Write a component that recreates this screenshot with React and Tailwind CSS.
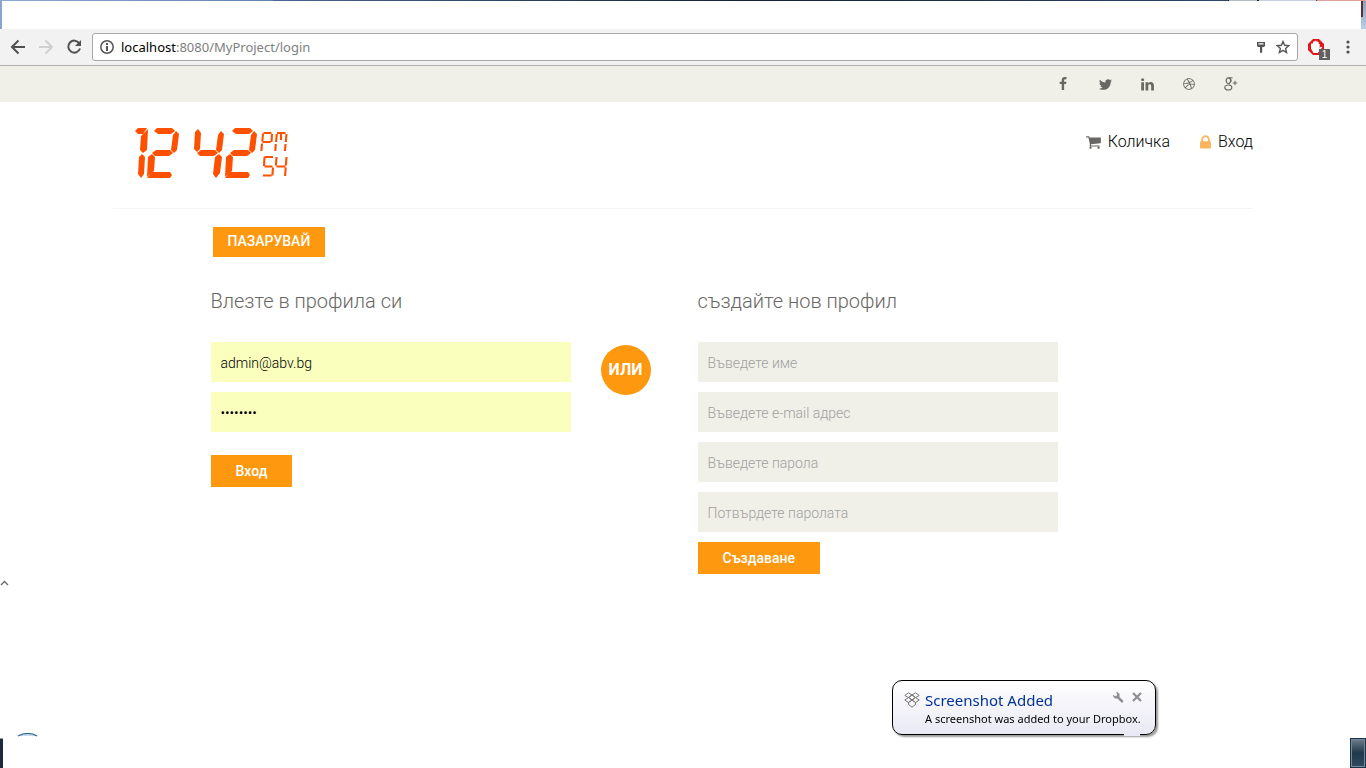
import React from "react";
import { FaDribbble } from "react-icons/fa";

const CLOCK = "#ff5000";

const DIGITS = { 1: "bc", 2: "abged", 4: "fgbc", 5: "afgcd" };

/* Slanted seven-segment shapes on a 32 x 50 grid */
const SEGMENTS = {
  a: "11,0 26,0 29,3 25,6 12,6 8,3",
  b: "30,3 33,6 31,22 28,25 25,22 27,7",
  c: "28,26 31,29 29,45 25,50 22,46 24,29",
  d: "6,44 24,44 26,47 24,50 1,50",
  e: "6,26 9,29 8,43 1,49 2,29",
  f: "7,1 10,5 9,21 6,24 3,21 4,4",
  g: "10,22 24,22 27,25 23,28 9,28 6,25",
};

function Digit({ value, x }) {
  return (
    <g transform={`translate(${x} 0)`}>
      {DIGITS[value].split("").map((s) => (
        <polygon key={s} points={SEGMENTS[s]} />
      ))}
    </g>
  );
}

function Clock() {
  return (
    <svg role="img" aria-label="12:42:54 PM" width="154" height="52" viewBox="0 0 154 52" fill={CLOCK}>
      <polygon points="0,3 3,0 12,0 8,6 3,6" />
      <polygon points="13,1 12,22 8,25 5,22 6,8" />
      <polygon points="7,26 10,29 9,46 6,50 3,46 4,29" />
      <Digit value="2" x="11" />
      <Digit value="4" x="56" />
      <Digit value="2" x="89" />
      <g fill="none" stroke={CLOCK} strokeWidth="2.1">
        <path d="M128.500 5h8M137 6l-.5 8M127.500 14h8M128 5.500l-.7 8M127 15.500l-.6 7.500M142 5h8.500M141.800 6l-.7 8M140.800 16l-.5 7M146 5v7M151.500 6l-.7 8M150.500 16l-.5 7" />
        <path d="M129.500 29h8.500M129.500 29l-.5 9M129.500 38.500h8M138 39.500l-.6 8M128 47.500h8.500M141.500 29l-.6 8.500M141.500 38.500h9M151.500 29l-.6 8.500M150.700 39.500l-.6 8.500" />
      </g>
    </svg>
  );
}

function Glyph({ d, size = "size-[14px]" }) {
  return (
    <svg viewBox="0 0 1792 1792" fill="currentColor" className={size} aria-hidden="true">
      <path d={d} />
    </svg>
  );
}

const FACEBOOK = "M1343 12v264h-157q-86 0-116 36t-30 108v189h293l-39 296h-254v759h-306v-759h-255v-296h255v-218q0-186 104-288.5t277-102.5q147 0 228 12z";
const TWITTER = "M1684 408q-67 98-162 167 1 14 1 42 0 130-38 259.5t-115.5 248.5-184.5 210.5-258 146-323 54.5q-271 0-496-145 35 4 78 4 225 0 401-138-105-2-188-64.5t-114-159.5q33 5 61 5 43 0 85-11-112-23-185.5-111.5t-73.5-205.5v-4q68 38 146 41-66-44-105-115t-39-154q0-88 44-163 121 149 294.5 238.5t371.5 99.5q-8-38-8-74 0-134 94.5-228.5t228.5-94.5q140 0 236 102 109-21 205-78-37 115-142 178 93-10 186-50z";
const LINKEDIN = "M477 625v991h-330v-991h330zm21-306q1 73-50.5 122t-135.5 49h-2q-82 0-132-49t-50-122q0-74 51.5-122.5t134.5-48.5 133 48.5 51 122.5zm1166 729v568h-329v-530q0-105-40.5-164.5t-126.5-59.5q-63 0-105.5 34.5t-63.5 85.5q-11 30-11 81v553h-329q2-399 2-647t-1-296l-1-48h329v144h-2q20-32 41-56t56.5-52 87-43.5 114.5-15.5q171 0 275 113.5t104 332.5z";
const CART = "M640 1536q0 52-38 90t-90 38-90-38-38-90 38-90 90-38 90 38 38 90zm896 0q0 52-38 90t-90 38-90-38-38-90 38-90 90-38 90 38 38 90zm128-1088v512q0 24-16.5 42.5t-40.5 21.5l-1044 122q13 60 13 70 0 16-24 64h920q26 0 45 19t19 45-19 45-45 19h-1024q-26 0-45-19t-19-45q0-11 8-31.5t16-36 21.5-40 15.5-29.5l-177-823h-204q-26 0-45-19t-19-45 19-45 45-19h256q16 0 28.5 6.5t19.5 15.5 13 24.5 8 26 5.5 29.5 4.5 26h1201q26 0 45 19t19 45z";
const LOCK = "M640 768h512v-192q0-106-75-181t-181-75-181 75-75 181v192zm832 96v576q0 40-28 68t-68 28h-960q-40 0-68-28t-28-68v-576q0-40 28-68t68-28h32v-192q0-184 132-316t316-132 316 132 132 316v192h32q40 0 68 28t28 68z";

function GooglePlus() {
  return (
    <svg viewBox="0 0 14 14" className="size-[14px]" fill="none" stroke="currentColor" aria-hidden="true">
      <ellipse cx="4.4" cy="3.7" rx="2.2" ry="2.8" strokeWidth="1.2" />
      <path d="M4.600 .8h4M6.200 1.200c1.400 1.600 1.100 3.600 0 4.400s-1.200 1.300 0 2.100" strokeWidth="1" />
      <ellipse cx="4.300" cy="10.500" rx="3.500" ry="2.500" strokeWidth="1.200" />
      <path d="M11 3.800v4.400M8.800 6h4.400" strokeWidth="1" />
    </svg>
  );
}

function BrowserBar() {
  return (
    <div className="flex h-9 items-center border-b border-[#b0b0b0] bg-[#f2f2f2] pr-[10px] pb-px">
      <button aria-label="Back" className="flex w-9 justify-center text-[#505050]">
        <svg width="16" height="16" viewBox="0 0 16 16" fill="none" stroke="currentColor" strokeWidth="2">
          <path d="M15 8H2.500M8.500 1.500 2 8l6.500 6.500" />
        </svg>
      </button>
      <button aria-label="Forward" className="flex w-5 justify-center text-[#d0d0d0]">
        <svg width="16" height="16" viewBox="0 0 16 16" fill="none" stroke="currentColor" strokeWidth="2">
          <path d="M1 8h12.500M7.500 1.500 14 8l-6.500 6.500" />
        </svg>
      </button>
      <button aria-label="Reload" className="flex w-9 justify-center text-[#505050]">
        <svg width="16" height="16" viewBox="0 0 16 16" fill="none" stroke="currentColor" strokeWidth="2">
          <path d="M13.300 4.300A6 6 0 1 0 14 9.500" />
          <path d="M15 1v6H9z" fill="currentColor" stroke="none" />
        </svg>
      </button>
      <div className="flex h-7 grow items-center rounded-[3px] border border-[#a8a8a8] bg-white px-[7px]">
        <svg width="14" height="14" viewBox="0 0 14 14" fill="none" stroke="#555" strokeWidth="1.500" aria-hidden="true">
          <circle cx="7" cy="7" r="6.200" />
          <path d="M7 3v2M7 6v5" strokeWidth="2" />
        </svg>
        <div className="ml-[7px] grow font-['Noto_Sans',sans-serif] text-[13px] leading-5 text-[#808080]">
          <span className="text-black">localhost</span>:8080/MyProject/login
        </div>
        <button aria-label="Saved passwords" className="mr-[10px]">
          <svg width="10" height="13" viewBox="0 0 10 13" fill="#555">
            <path fillRule="evenodd" d="M1 1h8v4L8 6H6.200v5L5 12.300 4 11.500V6H2L1 5zM2.500 2.300v1.200h5V2.300z" />
          </svg>
        </button>
        <button aria-label="Bookmark this page">
          <svg width="14" height="14" viewBox="0 0 14 14" fill="none" stroke="#555" strokeWidth="1.400">
            <path d="M7 1.500l1.600 3.800 4.200.4-3.200 2.700 1 4.100L7 10.300l-3.600 2.200 1-4.100L1.200 5.700l4.200-.4z" />
          </svg>
        </button>
      </div>
      <button aria-label="Content blocker" className="relative mr-4 ml-[10px]">
        <svg width="16" height="16" viewBox="0 0 16 16">
          <path d="M5 0h6l5 5v6l-5 5H5l-5-5V5z" fill="#e3151a" />
          <path d="M5.500 14 3 9.500V5l1.200-1 .8 1V3l1.200-1 .8 1V1.800h1.500V3l1-.8 1.200 1v1.500l1 .3V9l1.500-1.500 1 1L11 12.500 9.500 14z" fill="#fff" />
        </svg>
        <span className="absolute top-[10px] left-[11px] h-[11px] w-[11px] bg-[#606060] text-center font-['Liberation_Sans',sans-serif] text-[10px] leading-[11px] text-white">1</span>
      </button>
      <button aria-label="Menu" className="flex w-4 justify-center">
        <svg width="4" height="14" viewBox="0 0 4 14" fill="#505050">
          <circle cx="2" cy="2" r="1.600" />
          <circle cx="2" cy="7" r="1.600" />
          <circle cx="2" cy="12" r="1.600" />
        </svg>
      </button>
    </div>
  );
}

const social = [
  ["Facebook", <Glyph d={FACEBOOK} />],
  ["Twitter", <Glyph d={TWITTER} size="size-[15px]" />],
  ["LinkedIn", <Glyph d={LINKEDIN} size="size-[15px]" />],
  ["Dribbble", <FaDribbble className="size-[12px]" />],
  ["Google+", <GooglePlus />],
];

const field = "block h-10 w-full px-[10px] pt-px text-sm font-light outline-none";
const submit = "h-8 bg-[#fe980f] px-[25px] pb-px text-sm font-medium text-white";
const heading = "mb-[30px] text-xl leading-[22px] font-light text-[#696763]";

function SignupField({ label, type, name }) {
  return (
    <input
      aria-label={label}
      name={name}
      type={type}
      placeholder={label}
      className={`${field} bg-[#f0f0e9] placeholder:text-[#a0a0a0]`}
    />
  );
}

function Toast() {
  return (
    <div role="status" className="fixed right-[210px] bottom-[33px] flex h-[55px] w-[264px] rounded-[10px] border border-black bg-linear-to-b from-white to-[#e9e9f5] pl-[11px] font-['Noto_Sans',sans-serif] shadow-[2px_2px_2px_rgba(0,0,0,0.4)]">
      <svg className="mt-[11px] h-4 w-4 shrink-0" viewBox="0 0 16 16" fill="none" stroke="#777" aria-hidden="true">
        <path d="M4.500.8 8 3 4.500 5.500.8 3.500zM11.500.8 8 3l3.500 2.500 3.700-2zM4.500 5.500 8 8l-3.500 2.500L.8 8zM11.500 5.500 8 8l3.500 2.500L15.200 8zM4.500 10.500v2L8 15.200l3.500-2.700v-2L8 8zM8 3l3.500 2.500L8 8 4.500 5.500z" />
      </svg>
      <div className="ml-[5px] grow pt-[9px]">
        <div className="flex items-start">
          <h2 className="grow text-[15px] leading-[21px] text-[#003399]">Screenshot Added</h2>
          <button aria-label="Options" className="mt-[2px] mr-2">
            <svg width="11" height="11" viewBox="0 0 11 11" fill="#8e8e8e">
              <path d="M3 0 5 .5 6.500 2v3l4 4-1.500 2-4.500-4.500H2L.2 4.500 0 2.500l2 1.700L4 3.500V2z" />
            </svg>
          </button>
          <button aria-label="Close" className="mt-[2px] mr-[13px]">
            <svg width="10" height="10" viewBox="0 0 10 10" stroke="#8e8e8e" strokeWidth="2.200">
              <path d="m1 1 8 8M9 1 1 9" />
            </svg>
          </button>
        </div>
        <p className="text-[11px] leading-4 whitespace-nowrap text-black">A screenshot was added to your Dropbox.</p>
      </div>
      <span className="absolute right-[15px] -bottom-[2px] h-[3px] w-4 bg-[#e9e9f5]" />
    </div>
  );
}

export default function App() {
  return (
    <div className="flex min-h-screen flex-col bg-white font-[Roboto,sans-serif] text-[#696763]">
      <div className="flex h-[30px] flex-col bg-[#f2f2f2]">
        <div className="flex h-px">
          <div className="w-1/5 bg-linear-to-r from-[#8eaad0] to-[#6282ac]" />
          <div className="grow bg-linear-to-r from-[#4a6890] via-[#142036] to-[#2f466a]" />
          <div className="w-[30px] border-x border-[#20242c] bg-[#b4bcc8]" />
          <div className="w-[58px] border-l border-[#20242c] bg-[#c6d0de]" />
          <div className="w-[50px] border-l border-[#60343a] bg-[#e0a09c]" />
        </div>
        <div className="flex h-7">
          <div className="w-[2px] bg-[#88a5cf]" />
          <div className="grow bg-white" />
          <div className="flex w-[5px] flex-col bg-linear-to-b from-[#8fa3b8] to-[#b9cee9]">
            <div className="h-4 w-[2px] bg-[#602c35]" />
          </div>
        </div>
      </div>
      <BrowserBar />
      <div className="bg-[#f0f0e9]">
        <div className="mx-auto flex h-9 max-w-[1140px] justify-end pr-px">
          {social.map(([name, icon]) => (
            <a key={name} href="#" aria-label={name} className="flex w-[42px] items-center justify-center">
              {icon}
            </a>
          ))}
        </div>
      </div>
      <header className="mx-auto flex h-[107px] w-full max-w-[1140px] justify-between border-b border-[#f5f5f5] pt-[26px] pl-[22px]">
        <Clock />
        <nav className="flex h-7 gap-[27px] text-base leading-7 font-light text-black">
          <a href="#" className="flex items-center gap-[6px]">
            <span className="text-[#696763]"><Glyph d={CART} size="size-4" /></span>
            Количка
          </a>
          <a href="#" className="flex items-center gap-1">
            <span className="text-[#fdb45e]"><Glyph d={LOCK} size="size-[17px]" /></span>
            Вход
          </a>
        </nav>
      </header>
      <main className="mx-auto w-full max-w-[945px]">
        <a href="#" className="mt-[18px] ml-[2px] inline-block bg-[#fe980f] px-[15px] pb-[2px] text-sm leading-7 font-medium text-white">ПАЗАРУВАЙ</a>
        <div className="mt-[33px] flex">
          <form className="w-[360px]" onSubmit={(e) => e.preventDefault()}>
            <h2 className={heading}>Влезте в профила си</h2>
            <div className="flex flex-col gap-[10px]">
              <input aria-label="E-mail" type="email" defaultValue="admin@abv.bg" className={`${field} bg-[#faffbd] text-black`} />
              <input aria-label="Парола" type="password" defaultValue="password" className={`${field} bg-[#faffbd] text-black`} />
            </div>
            <button className={`${submit} mt-[23px]`}>Вход</button>
          </form>
          <div className="mx-[30px] mt-[55px] flex h-[50px] w-[50px] items-center justify-center rounded-full bg-[#fe980f] text-base font-bold text-white">ИЛИ</div>
          <form className="ml-[17px] w-[360px]" onSubmit={(e) => e.preventDefault()}>
            <h2 className={heading}>създайте нов профил</h2>
            <div className="flex flex-col items-start gap-[10px]">
              <SignupField label="Въведете име" name="name" type="text" />
              <SignupField label="Въведете e-mail адрес" name="email" type="email" />
              <SignupField label="Въведете парола" name="password" type="password" />
              <SignupField label="Потвърдете паролата" name="confirm" type="password" />
              <button className={submit}>Създаване</button>
            </div>
          </form>
        </div>
      </main>
      <a href="#" aria-label="Back to top" className="mt-[6px] w-[10px]">
        <svg width="10" height="6" viewBox="0 0 10 6" fill="none" stroke="#696763" strokeWidth="1.300">
          <path d="m1 5 3.500-3.500L8 5" />
        </svg>
      </a>
      <div className="mt-auto flex flex-col">
        <svg className="ml-[17px]" width="22" height="5" viewBox="0 0 22 5" aria-hidden="true">
          <path d="M1 3q10-5 19 0" fill="#c9dcec" stroke="#2d6494" strokeWidth="1.200" />
        </svg>
        <div className="flex h-[30px] justify-between">
          <div className="w-[3px] border-t border-[#8b98a8] bg-[#1d2a3b]" />
          <div className="w-4 bg-[#1c3345] p-px">
            <div className="h-full border border-[#71899b] bg-linear-to-b from-[#6b7a86] via-[#20384a] to-[#2d4a5e]" />
          </div>
        </div>
      </div>
      <Toast />
    </div>
  );
}
